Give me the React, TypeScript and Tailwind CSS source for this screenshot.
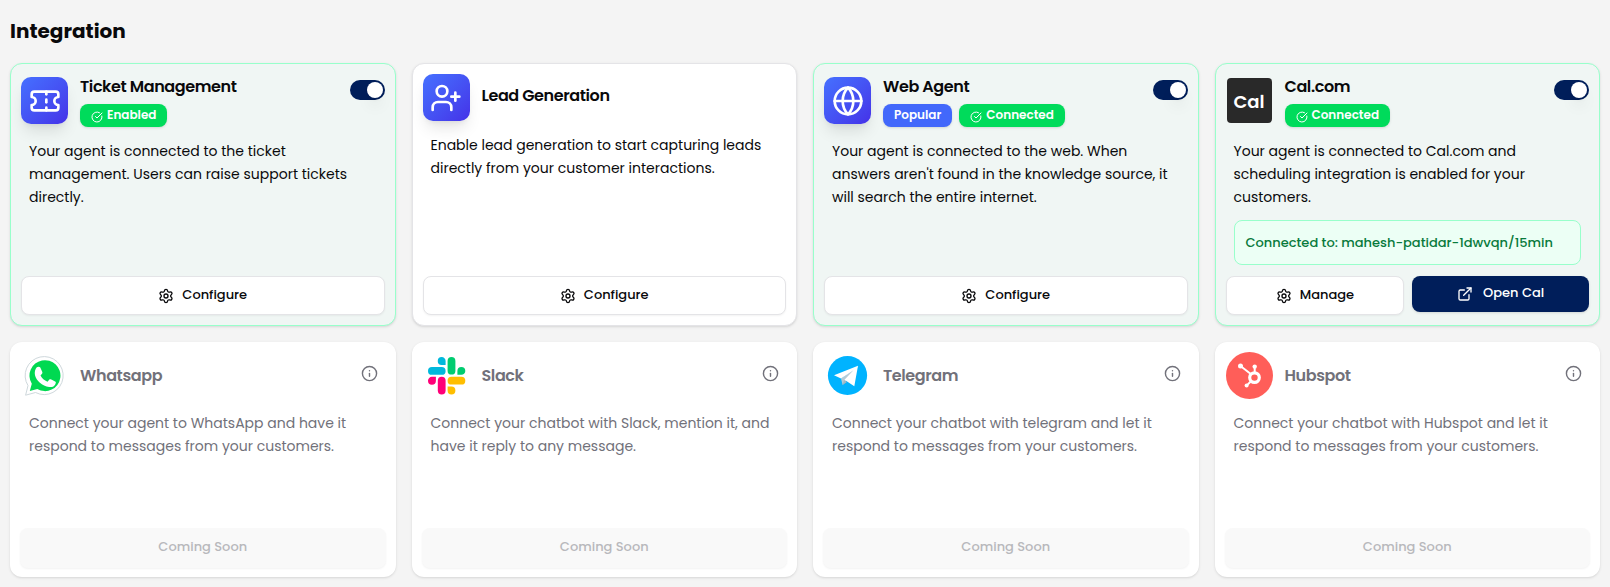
import { useState, type ReactNode } from "react";
import { CircleCheckBig, ExternalLink, Globe, Info, Settings, Ticket, UserPlus } from "lucide-react";

function GradientTile({ children }: { children: ReactNode }) {
  return (
    <div className="flex size-[47px] shrink-0 items-center justify-center rounded-[10px] bg-linear-to-br from-[#4570ff] to-[#4530e8] text-white shadow-lg">
      {children}
    </div>
  );
}

function CalLogo() {
  return (
    <div className="flex size-[47px] shrink-0 items-center justify-center p-px">
      <div className="flex size-full items-center justify-center rounded bg-[#292929] pt-[3px] text-lg font-semibold text-white">
        Cal
      </div>
    </div>
  );
}

function WhatsappLogo() {
  return (
    <svg viewBox="0 0 47 47" className="size-[47px] shrink-0" aria-hidden="true">
      <path d="M4.600 43.200 7 33.600A19 19 0 1 1 14.500 40.500Z" fill="#fff" stroke="#cfd8dc" strokeWidth="1" />
      <path d="M8.800 39 10.800 31.800A15.500 15.500 0 1 1 16.300 37.100Z" fill="#00d951" />
      <path
        d="M15.800 15.300c.7-.8 2.900-1 3.500.1l2 4.500c.3.700.1 1.300-.3 1.800l-1.500 1.900c1.500 2.900 3.800 4.900 7 6.200l1.900-2.200c.4-.5.9-.6 1.400-.3l4.300 2.100c.7.300.8.800.7 1.500-.6 3.200-3.600 4.500-6.600 4.100-7.200-1.200-12.900-6.500-14.200-11.800-.7-2.900.2-6.100 1.800-7.900Z"
        fill="#fff"
      />
    </svg>
  );
}

function SlackLogo() {
  return (
    <svg viewBox="0 0 47 47" className="size-[47px] shrink-0" aria-hidden="true">
      <g fill="#00b8dc">
        <path d="M18.700 5a3.900 3.900 0 1 0 0 7.900h3.900V9a3.900 3.900 0 0 0-3.900-4Z" />
        <rect x="5" y="15" width="17.600" height="7.800" rx="3.900" />
      </g>
      <g fill="#00cc70">
        <rect x="24.600" y="5" width="7.800" height="17.600" rx="3.900" />
        <path d="M42.300 18.900a3.900 3.900 0 1 0-7.900 0v3.900h3.900a3.900 3.900 0 0 0 4-3.900Z" />
      </g>
      <g fill="#ffbe00">
        <rect x="24.600" y="24.800" width="17.700" height="7.800" rx="3.900" />
        <path d="M24.600 34.600v3.900a3.900 3.900 0 1 0 3.900-3.900Z" />
      </g>
      <g fill="#ff0078">
        <path d="M5 28.700a3.900 3.900 0 1 0 7.900 0v-3.900H9a3.900 3.900 0 0 0-4 3.900Z" />
        <rect x="14.800" y="24.800" width="7.800" height="17.600" rx="3.900" />
      </g>
    </svg>
  );
}

function TelegramLogo() {
  return (
    <svg viewBox="0 0 47 47" className="size-[47px] shrink-0" aria-hidden="true">
      <circle cx="23.500" cy="23.500" r="19.600" fill="#00b3ff" />
      <path d="m17 26.500 1.600 6.500 16-19Z" fill="#b6cbd6" />
      <path d="m18.600 33 1.400-4.800 3 1.700Z" fill="#9fb8c5" />
      <path d="M10 23.300 34 13.800 30.300 34.200 20.500 27.800 29.500 18.200 17 26.500Z" fill="#fff" />
    </svg>
  );
}

function HubspotLogo() {
  return (
    <svg viewBox="0 0 47 47" className="size-[47px] shrink-0" aria-hidden="true">
      <circle cx="23.500" cy="23.500" r="23.500" fill="#ff5e59" />
      <g stroke="#fff" fill="none">
        <circle cx="28.500" cy="25.600" r="4.800" strokeWidth="3.200" />
        <path d="M14.500 14 24.800 22M28.700 15v5M25 29.200 20.800 33.400" strokeWidth="2" />
      </g>
      <g fill="#fff">
        <circle cx="14.500" cy="14" r="2.500" />
        <circle cx="28.700" cy="14.600" r="2.200" />
        <circle cx="20.600" cy="33.600" r="2" />
      </g>
    </svg>
  );
}

function Badge({ tone, children }: { tone: "green" | "blue"; children: ReactNode }) {
  const color = tone === "green" ? "bg-[#00db5b]" : "bg-[#4268fb]";
  return (
    <span
      className={`flex h-[23px] items-center gap-1 rounded-lg px-[11px] pb-0.5 text-xs font-semibold text-white shadow-sm ${color}`}
    >
      {tone === "green" && <CircleCheckBig className="mt-1 size-3" aria-hidden="true" />}
      {children}
    </span>
  );
}

function Toggle({ label }: { label: string }) {
  const [on, setOn] = useState(true);
  return (
    <button
      type="button"
      role="switch"
      aria-checked={on}
      aria-label={label}
      onClick={() => setOn(!on)}
      className={`mt-1.5 flex h-5 w-[35px] shrink-0 items-center rounded-full px-0.5 ${on ? "justify-end bg-[#001e5a]" : "justify-start bg-gray-300"}`}
    >
      <span className="size-4 rounded-full bg-white shadow-lg" />
    </button>
  );
}

function OutlineButton({ children }: { children: ReactNode }) {
  return (
    <button
      type="button"
      className="flex h-[39px] flex-1 items-center justify-center gap-2 rounded-lg border border-[#e4e4e7] bg-white pb-0.5 text-[13px] font-medium text-[#09090b] shadow-xs"
    >
      <Settings className="mt-0.5 size-4" aria-hidden="true" />
      {children}
    </button>
  );
}

type Integration = {
  name: string;
  icon: ReactNode;
  text: string;
  status?: string;
  popular?: boolean;
  connection?: string;
  action?: string;
};

const active: Integration[] = [
  {
    name: "Ticket Management",
    icon: <GradientTile><Ticket className="size-8" /></GradientTile>,
    text: "Your agent is connected to the ticket management. Users can raise support tickets directly.",
    status: "Enabled",
    action: "Configure",
  },
  {
    name: "Lead Generation",
    icon: <GradientTile><UserPlus className="size-8" /></GradientTile>,
    text: "Enable lead generation to start capturing leads directly from your customer interactions.",
    action: "Configure",
  },
  {
    name: "Web Agent",
    icon: <GradientTile><Globe className="size-8" /></GradientTile>,
    text: "Your agent is connected to the web. When answers aren't found in the knowledge source, it will search the entire internet.",
    status: "Connected",
    popular: true,
    action: "Configure",
  },
  {
    name: "Cal.com",
    icon: <CalLogo />,
    text: "Your agent is connected to Cal.com and scheduling integration is enabled for your customers.",
    status: "Connected",
    connection: "mahesh-patidar-1dwvqn/15min",
    action: "Manage",
  },
];

const upcoming: Integration[] = [
  {
    name: "Whatsapp",
    icon: <WhatsappLogo />,
    text: "Connect your agent to WhatsApp and have it respond to messages from your customers.",
  },
  {
    name: "Slack",
    icon: <SlackLogo />,
    text: "Connect your chatbot with Slack, mention it, and have it reply to any message.",
  },
  {
    name: "Telegram",
    icon: <TelegramLogo />,
    text: "Connect your chatbot with telegram and let it respond to messages from your customers.",
  },
  {
    name: "Hubspot",
    icon: <HubspotLogo />,
    text: "Connect your chatbot with Hubspot and let it respond to messages from your customers.",
  },
];

function ActiveCard({ item }: { item: Integration }) {
  const frame = item.status ? "border-[#98ffcb] bg-[#f0f6f4]" : "border-[#e4e4e7] bg-white";
  return (
    <article className={`flex min-h-[263px] flex-col rounded-xl border p-2.5 shadow-sm ${frame}`}>
      <header className="flex items-start justify-between">
        <div className="flex items-center gap-3">
          {item.icon}
          <div>
            <h2 className="mb-[3px] text-base leading-[26px] font-semibold tracking-tight">{item.name}</h2>
            {item.status && (
              <div className="mt-1 flex gap-[7px]">
                {item.popular && <Badge tone="blue">Popular</Badge>}
                <Badge tone="green">{item.status}</Badge>
              </div>
            )}
          </div>
        </div>
        {item.status && <Toggle label={item.name} />}
      </header>
      <div className="mx-2 mt-[13px] text-sm leading-relaxed">
        <p>{item.text}</p>
        {item.connection && (
          <p className="mt-3 rounded-lg border border-[#98ffcb] bg-[#ecfff5] px-[11px] py-[11px] text-[13px] font-medium text-[#087a3c]">
            Connected to: {item.connection}
          </p>
        )}
      </div>
      <footer className="mt-auto flex items-start gap-2">
        <OutlineButton>{item.action}</OutlineButton>
        {item.connection && (
          <a
            href="#open-cal"
            className="flex h-9 flex-1 items-center justify-center gap-2.5 rounded-lg bg-[#001e5a] pb-0.5 text-[13px] font-medium text-white shadow-sm"
          >
            <ExternalLink className="mt-0.5 size-4" aria-hidden="true" />
            Open Cal
          </a>
        )}
      </footer>
    </article>
  );
}

function UpcomingCard({ item }: { item: Integration }) {
  return (
    <article className="flex min-h-[235px] flex-col rounded-xl bg-white px-2.5 pt-2.5 pb-[9px] text-[#71717a] shadow-sm">
      <header className="flex items-center justify-between px-px">
        <div className="flex items-center gap-3">
          {item.icon}
          <h2 className="text-base font-semibold tracking-tight">{item.name}</h2>
        </div>
        <button type="button" aria-label={`About ${item.name}`} className="pr-[7px] pb-1">
          <Info className="size-[17px]" />
        </button>
      </header>
      <p className="mx-[9px] mt-[13px] text-sm leading-relaxed">{item.text}</p>
      <button
        type="button"
        disabled
        className="mt-auto h-10 rounded-lg bg-[#f9f9f9] pb-0.5 text-[13px] font-medium text-[#b8b8bc] shadow-xs"
      >
        Coming Soon
      </button>
    </article>
  );
}

export default function App() {
  return (
    <main className="min-h-screen bg-[#f4f4f4] px-2.5 pt-4 pb-2.5 font-['Poppins','Inter',sans-serif] text-[#09090b]">
      <h1 className="mb-[17px] text-xl leading-[30px] font-bold">Integration</h1>
      <div className="grid grid-cols-1 gap-4 sm:grid-cols-2 lg:grid-cols-4">
        {active.map((item) => <ActiveCard key={item.name} item={item} />)}
        {upcoming.map((item) => <UpcomingCard key={item.name} item={item} />)}
      </div>
    </main>
  );
}
